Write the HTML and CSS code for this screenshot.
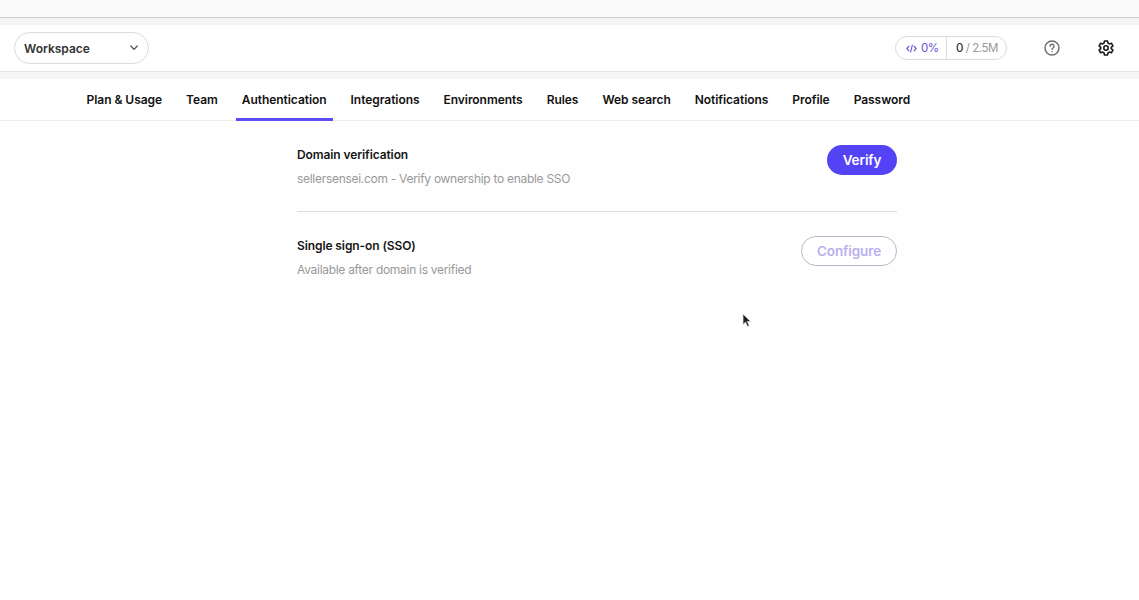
FILE: index.html
```
<!DOCTYPE html>
<html lang="en">
<head>
<meta charset="UTF-8">
<meta name="viewport" content="width=device-width, initial-scale=1.0">
<title>Authentication settings</title>
<link rel="stylesheet" href="styles.css">
</head>
<body>
  <div class="top-strip"></div>

  <header class="header">
    <button class="workspace" type="button">
      <span>Workspace</span>
      <svg width="10" height="6" viewBox="0 0 10 6" fill="none" stroke="#555" stroke-width="1.3" stroke-linecap="round" stroke-linejoin="round"><path d="M1.800 1L5 4.400 8.200 1"/></svg>
    </button>

    <div class="usage">
      <span class="usage-percent">
        <svg width="11" height="9" viewBox="0 0 11 9" fill="none" stroke="#6258d3" stroke-width="1.1" stroke-linecap="round" stroke-linejoin="round"><path d="M3 2.2L.8 4.500 3 6.800M8 2.200l2.200 2.300L8 6.800M6.300 1L4.700 8"/></svg>
        0%
      </span>
      <span class="usage-count"><b>0</b> / 2.5M</span>
    </div>

    <svg class="icon-help" width="16" height="16" viewBox="0 0 16 16" fill="none" stroke="#6c6c6c" stroke-width="1.4" stroke-linecap="round" stroke-linejoin="round"><circle cx="8" cy="8" r="7"/><path d="M6 6.300a2 2 0 1 1 3 1.700c-.7.4-1 .7-1 1.400"/><path d="M8 11.600v.1"/></svg>
    <svg class="icon-settings" width="16" height="16" viewBox="0 0 16 16" fill="none" stroke="#1a1a1a" stroke-width="1.6" stroke-linejoin="round"><path d="M6.500 1h3l.5 2.100 1.300.8 2.100-.7 1.500 2.600L13.300 7.300v1.400l1.600 1.500-1.500 2.600-2.100-.7-1.300.8L9.500 15h-3L6 12.900l-1.300-.8-2.100.7-1.500-2.600 1.600-1.500V7.300L1.100 5.800l1.500-2.600 2.100.7L6 3.100z"/><circle cx="8" cy="8" r="2.200"/></svg>
  </header>

  <nav class="tabs">
    <a class="tab">Plan &amp; Usage</a>
    <a class="tab">Team</a>
    <a class="tab active">Authentication</a>
    <a class="tab">Integrations</a>
    <a class="tab">Environments</a>
    <a class="tab">Rules</a>
    <a class="tab">Web search</a>
    <a class="tab">Notifications</a>
    <a class="tab">Profile</a>
    <a class="tab">Password</a>
  </nav>

  <main class="content">
    <section class="setting">
      <div>
        <h2>Domain verification</h2>
        <p>sellersensei.com - Verify ownership to enable SSO</p>
      </div>
      <button class="btn btn-primary" type="button">Verify</button>
    </section>
    <section class="setting">
      <div>
        <h2>Single sign-on (SSO)</h2>
        <p>Available after domain is verified</p>
      </div>
      <button class="btn btn-outline" type="button" disabled>Configure</button>
    </section>
  </main>

  <svg class="cursor" width="10" height="15" viewBox="0 0 10 15"><path d="M1 1v10.500l2.500-2.300 2 4.300 1.800-.9-2-4.100h3.400z" fill="#222" stroke="#ddd" stroke-width=".8"/></svg>
</body>
</html>
```

FILE: styles.css
```
* {
  box-sizing: border-box;
}

body {
  margin: 0;
  height: 100vh;
  overflow: hidden;
  background-color: #fefefe;
  color: #171717;
  font-family: Inter, sans-serif;
  font-size: 12px;
}

button {
  font-family: inherit;
}

.top-strip {
  height: 25px;
  background: linear-gradient(#fafafa 17px, #cfcfcf 17px, #cfcfcf 18px, #f4f4f4 18px);
}

.header {
  display: flex;
  align-items: center;
  height: 47px;
  padding: 0 25px 0 14px;
  background-color: #fff;
  border-bottom: 1px solid #e4e4e4;
}

.workspace {
  display: flex;
  align-items: center;
  justify-content: space-between;
  width: 135px;
  height: 32px;
  padding: 0 9px 0 9px;
  background-color: #fff;
  border: 1px solid #dcdcdc;
  border-radius: 16px;
  color: #333;
  font-size: 12px;
  font-weight: 600;
}

.usage {
  display: flex;
  height: 24px;
  margin-left: auto;
  border: 1px solid #dcdcdc;
  border-radius: 12px;
  font-size: 11.5px;
  letter-spacing: -0.45px;
  line-height: 22px;
}

.usage-percent {
  display: flex;
  align-items: center;
  gap: 4px;
  width: 51px;
  padding-left: 10px;
  border-right: 1px solid #dcdcdc;
  color: #6258d3;
}

.usage-count {
  width: 59px;
  padding-left: 9px;
  color: #999;
  white-space: nowrap;
}

.usage-count b {
  color: #333;
  font-weight: 500;
}

.icon-help {
  margin-left: 37px;
}

.icon-settings {
  margin-left: 38px;
}

.tabs {
  display: flex;
  gap: 12px;
  height: 49px;
  padding: 0 80.6px;
  background-color: #fff;
  border-top: 7px solid #f5f5f5;
  border-bottom: 1px solid #ededed;
}

.tab {
  height: 42px;
  padding: 0 6px;
  border-bottom: 3px solid transparent;
  color: #111;
  font-weight: 600;
  letter-spacing: -0.05px;
  line-height: 42px;
  white-space: nowrap;
}

.tab.active {
  border-color: #5b4cf5;
}

.content {
  width: 600px;
  margin-left: 297px;
}

.setting {
  display: flex;
  align-items: flex-start;
  justify-content: space-between;
  height: 91px;
  padding-top: 24px;
}

.setting:first-child {
  border-bottom: 1px solid #dedede;
}

.setting h2 {
  margin: 0;
  font-size: 12px;
  font-weight: 600;
  letter-spacing: -0.1px;
  line-height: 20px;
}

.setting p {
  margin: 4px 0 0;
  color: #999;
  font-size: 12px;
  letter-spacing: -0.29px;
  line-height: 20px;
}

.btn {
  height: 30px;
  padding: 0 0 1px;
  border-radius: 15px;
  font-size: 13.5px;
  font-weight: 600;
  letter-spacing: -0.1px;
}

.btn-primary {
  width: 70px;
  background-color: #5443f5;
  border: none;
  color: #fff;
}

.btn-outline {
  width: 96px;
  background-color: #fff;
  border: 1px solid #bab8c6;
  color: #b9b0ee;
}

.cursor {
  position: absolute;
  left: 742px;
  top: 313px;
}
```
